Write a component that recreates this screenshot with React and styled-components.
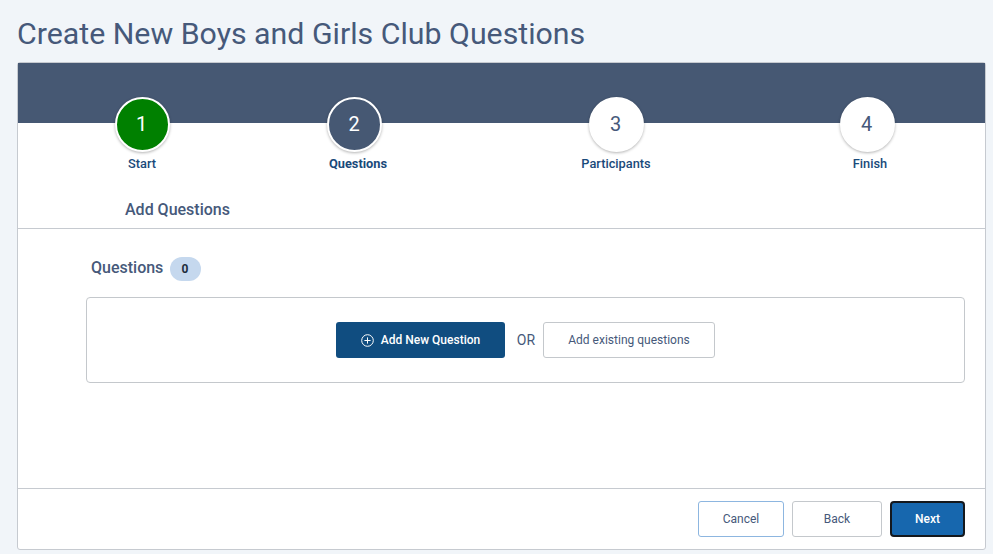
import styled, { createGlobalStyle } from 'styled-components'

const GlobalStyle = createGlobalStyle`
  html, body {
    margin: 0;
    padding: 0;
    background: #f1f5f9;
    font-family: Roboto, "Liberation Sans", sans-serif;
    overflow: hidden;
  }
`

const steps = [
  { number: 1, label: 'Start', state: 'done', nudge: 0 },
  { number: 2, label: 'Questions', state: 'current', nudge: 7 },
  { number: 3, label: 'Participants', state: 'todo', nudge: 0 },
  { number: 4, label: 'Finish', state: 'todo', nudge: 6 },
]

const App = () => {
  return (
    <Page>
      <GlobalStyle />
      <Title>Create New Boys and Girls Club Questions</Title>
      <Card>
        <Banner />
        <Steps>
          {steps.map((step) => (
            <Step key={step.number}>
              <Circle $state={step.state} $nudge={step.nudge}>{step.number}</Circle>
              <StepLabel $current={step.state === 'current'}>{step.label}</StepLabel>
            </Step>
          ))}
        </Steps>
        <SectionHead>Add Questions</SectionHead>
        <Body>
          <QuestionsHead>
            <h3>Questions</h3>
            <Count>0</Count>
          </QuestionsHead>
          <ActionBox>
            <PrimaryAction>
              <svg width="13" height="13" viewBox="0 0 13 13" fill="none" stroke="currentColor" strokeWidth="1">
                <circle cx="6.5" cy="6.5" r="5.8" />
                <path d="M6.5 3.4v6.2M3.4 6.5h6.2" />
              </svg>
              Add New Question
            </PrimaryAction>
            <Or>OR</Or>
            <SecondaryAction>Add existing questions</SecondaryAction>
          </ActionBox>
        </Body>
        <Footer>
          <FooterButton $width={86} $border="#8db6e0">Cancel</FooterButton>
          <FooterButton $width={90} $border="#c4c8cc">Back</FooterButton>
          <NextButton>Next</NextButton>
        </Footer>
      </Card>
    </Page>
  )
}

export default App

const Page = styled.div`
  height: 554px;
  padding: 0 7px 0 17px;
  box-sizing: border-box;
  display: flex;
  flex-direction: column;
`

const Title = styled.h1`
  margin: 0;
  height: 62px;
  padding: 16px 0 0 0;
  box-sizing: border-box;
  font-size: 30.3px;
  line-height: 36px;
  font-weight: 400;
  color: #46597a;
`

const Card = styled.div`
  width: 969px;
  height: 488px;
  box-sizing: border-box;
  display: flex;
  flex-direction: column;
  background: #fff;
  border: 1px solid #c6cad0;
  border-radius: 3px;
`

const Banner = styled.div`
  height: 60px;
  flex: none;
  background: #465873;
`

const Steps = styled.div`
  display: grid;
  grid-template-columns: 248px 184px 332px 176px;
  margin-top: -26px;
  flex: none;
`

const Step = styled.div`
  display: flex;
  flex-direction: column;
  align-items: center;
`

const Circle = styled.div`
  width: 55px;
  height: 55px;
  box-sizing: border-box;
  padding: 0 1px 2px 0;
  margin-right: ${(p) => p.$nudge}px;
  border: 2px solid #fff;
  border-radius: 50%;
  display: flex;
  align-items: center;
  justify-content: center;
  font-size: 20px;
  box-shadow: 0 1px 3px rgba(0, 0, 0, 0.3);
  background: ${(p) => (p.$state === 'done' ? '#008000' : p.$state === 'current' ? '#465873' : '#fff')};
  color: ${(p) => (p.$state === 'todo' ? '#46597a' : '#fff')};
`

const StepLabel = styled.div`
  margin-top: 4px;
  font-size: 12.8px;
  line-height: 16px;
  font-weight: ${(p) => (p.$current ? 700 : 500)};
  color: #1a4a7a;
`

const SectionHead = styled.div`
  height: 57px;
  flex: none;
  box-sizing: border-box;
  padding: 28px 0 0 107px;
  border-bottom: 1px solid #c6cad0;
  font-size: 16px;
  line-height: 20px;
  font-weight: 500;
  color: #46597a;
`

const Body = styled.div`
  flex: 1;
  padding: 25px 20px 0 68px;
`

const QuestionsHead = styled.div`
  display: flex;
  align-items: center;
  gap: 7px;
  padding-left: 5px;
  h3 {
    margin: 0;
    font-size: 16px;
    line-height: 20px;
    font-weight: 500;
    color: #46597a;
  }
`

const Count = styled.span`
  width: 31px;
  height: 24px;
  margin-top: 3px;
  padding-right: 2px;
  box-sizing: border-box;
  border-radius: 12px;
  background: #c5d8ee;
  display: flex;
  align-items: center;
  justify-content: center;
  font-size: 12px;
  font-weight: 700;
  color: #1f2d3d;
`

const ActionBox = styled.div`
  height: 86px;
  margin-top: 16px;
  box-sizing: border-box;
  border: 1px solid #c4c8cc;
  border-radius: 4px;
  display: flex;
  align-items: center;
  justify-content: center;
  padding-right: 1px;
`

const PrimaryAction = styled.button`
  width: 169px;
  height: 36px;
  border: none;
  border-radius: 3px;
  padding: 0 0 0 1px;
  background: #104d80;
  color: #fff;
  font-family: inherit;
  font-size: 12px;
  font-weight: 500;
  display: flex;
  align-items: center;
  justify-content: center;
  gap: 7px;
`

const Or = styled.span`
  width: 38px;
  box-sizing: border-box;
  padding-left: 5px;
  text-align: center;
  font-size: 14px;
  color: #46597a;
`

const SecondaryAction = styled.button`
  width: 172px;
  height: 36px;
  padding: 0 0 0 1px;
  background: #fff;
  border: 1px solid #c4c8cc;
  border-radius: 3px;
  font-family: inherit;
  font-size: 12px;
  color: #46597a;
`

const Footer = styled.div`
  height: 61px;
  flex: none;
  box-sizing: border-box;
  border-top: 1px solid #c6cad0;
  display: flex;
  justify-content: flex-end;
  align-items: flex-start;
  gap: 8px;
  padding: 12px 20px 0 0;
`

const FooterButton = styled.button`
  width: ${(p) => p.$width}px;
  height: 36px;
  background: #fff;
  border: 1px solid ${(p) => p.$border};
  border-radius: 3px;
  font-family: inherit;
  font-size: 12px;
  color: #46597a;
`

const NextButton = styled.button`
  width: 75px;
  height: 36px;
  background: #1767ae;
  border: 2px solid #14181d;
  border-radius: 4px;
  font-family: inherit;
  font-size: 12px;
  font-weight: 500;
  color: #fff;
`
